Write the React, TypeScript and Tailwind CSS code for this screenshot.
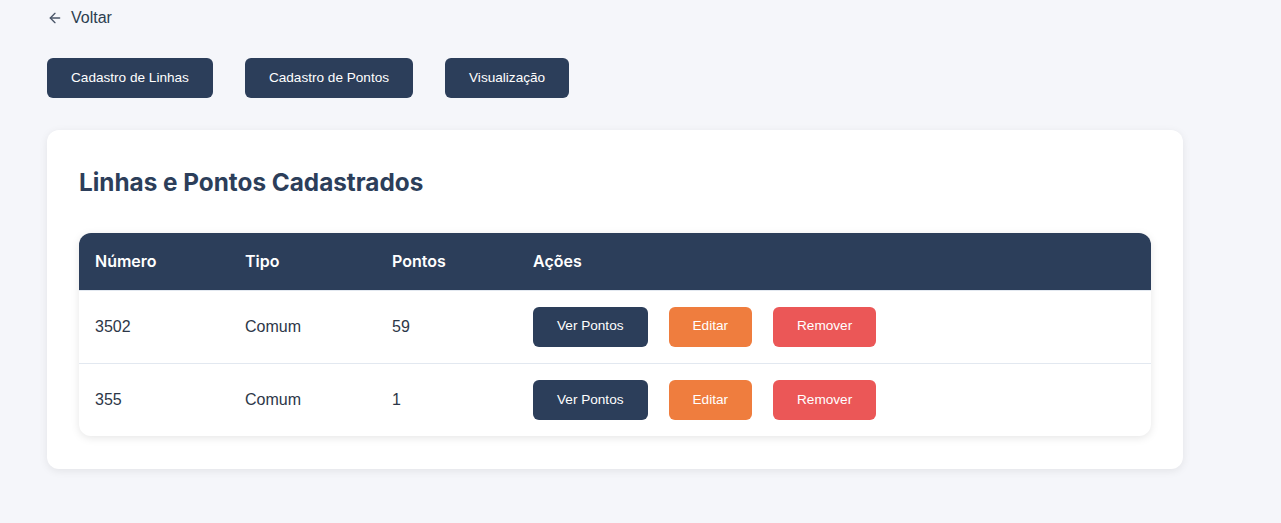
import { ArrowLeft } from "lucide-react";

interface Linha {
  numero: string;
  tipo: string;
  pontos: number;
}

const LINHAS: Linha[] = [
  { numero: "3502", tipo: "Comum", pontos: 59 },
  { numero: "355", tipo: "Comum", pontos: 1 },
];

const NAV = ["Cadastro de Linhas", "Cadastro de Pontos", "Visualização"];

const BTN = "px-6 h-10 text-white text-[13.6px] rounded-md";

export default function App() {
  return (
    <div className="min-h-screen bg-[#f5f6fa] font-['Liberation_Sans',Arial,sans-serif] text-[#2c3e50]">
      <div className="pl-[47px] pt-2 w-[1183px]">
        {/* Back link */}
        <button className="flex items-center gap-2 text-base text-[#2c3e50] h-5">
          <ArrowLeft className="w-4 h-4 text-[#4a5568]" strokeWidth={2} />
          <span>Voltar</span>
        </button>

        {/* Nav buttons */}
        <div className="flex gap-8 mt-[30px]">
          {NAV.map((label) => (
            <button key={label} className={`${BTN} bg-[#2c3e5a]`}>
              {label}
            </button>
          ))}
        </div>

        {/* Card */}
        <div className="mt-8 bg-white rounded-xl shadow-[0_2px_8px_rgba(0,0,0,0.08)] px-8 pt-[36px] pb-[33px]">
          <h2 className="font-['Inter',sans-serif] text-[24.3px] font-bold text-[#2c3e5a] leading-8">
            Linhas e Pontos Cadastrados
          </h2>

          <div className="mt-[35px] rounded-xl overflow-hidden shadow-[0_2px_8px_rgba(0,0,0,0.1)]">
            <table className="w-full border-collapse text-left">
              <thead>
                <tr className="bg-[#2c3e5a] text-white font-['Inter',sans-serif] text-base font-semibold">
                  <th className="w-[150px] px-4 h-[57px] pb-px font-semibold">Número</th>
                  <th className="w-[147px] px-4 pb-px font-semibold">Tipo</th>
                  <th className="w-[141px] px-4 pb-px font-semibold">Pontos</th>
                  <th className="px-4 pb-px font-semibold">Ações</th>
                </tr>
              </thead>
              <tbody>
                {LINHAS.map((l) => (
                  <tr key={l.numero} className="text-base text-[#2d3748] border-t border-[#e2e8f0]">
                    <td className="px-4 h-[73px]">{l.numero}</td>
                    <td className="px-4">{l.tipo}</td>
                    <td className="px-4">{l.pontos}</td>
                    <td className="px-4">
                      <div className="flex gap-[21px]">
                        <button className={`${BTN} bg-[#2c3e5a]`}>Ver Pontos</button>
                        <button className={`${BTN} bg-[#ef7d3e]`}>Editar</button>
                        <button className={`${BTN} bg-[#eb5757]`}>Remover</button>
                      </div>
                    </td>
                  </tr>
                ))}
              </tbody>
            </table>
          </div>
        </div>
      </div>
    </div>
  );
}
